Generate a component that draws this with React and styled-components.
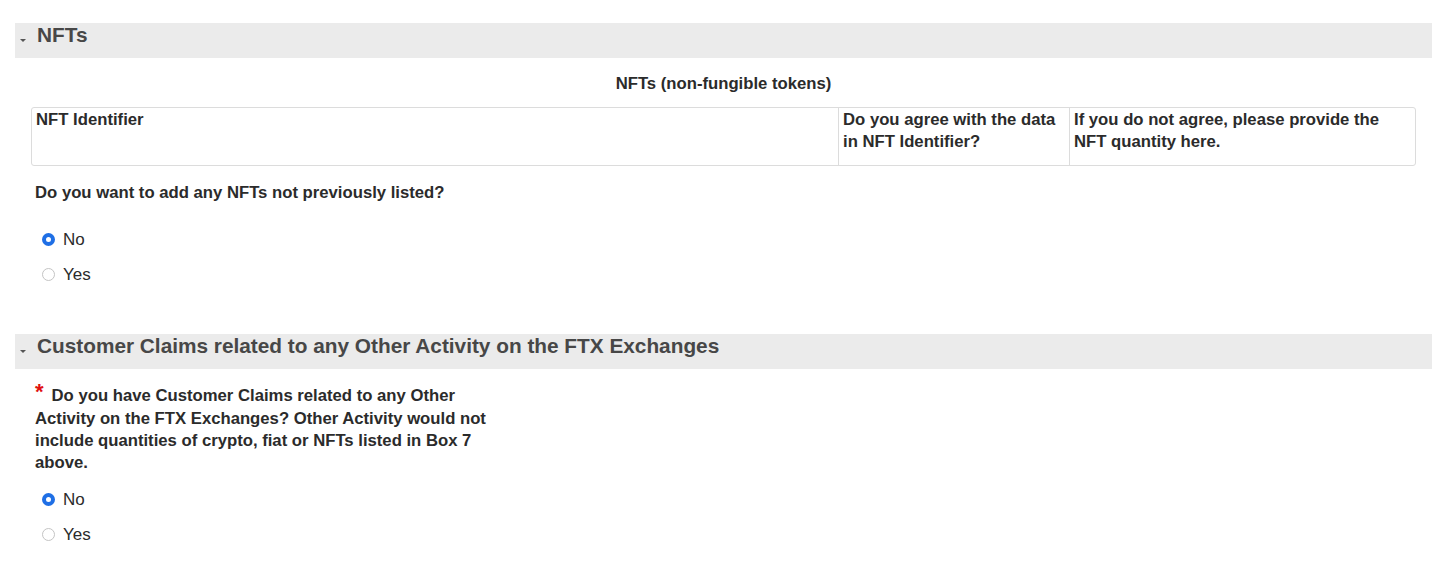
import React from 'react';
import styled, { createGlobalStyle } from 'styled-components';

const GlobalStyle = createGlobalStyle`
body {
  margin: 0;
  background: #fff;
  font-family: 'Liberation Sans', Arial, sans-serif;
  color: #2b2b2b;
}
`;

const Page = styled.div`
padding: 23px 15px 0 15px;
`;

const SectionBar = styled.div`
display: flex;
align-items: flex-start;
height: 35px;
background: #ebebeb;
padding-left: 5px;
`;

const Caret = styled.span`
width: 0;
height: 0;
border-left: 3px solid transparent;
border-right: 3px solid transparent;
border-top: 3px solid #555;
margin: 16px 11px 0 0;
`;

const SectionTitle = styled.h2`
margin: 0;
font-size: 20.8px;
line-height: 24px;
font-weight: 700;
color: #474747;
`;

const SectionBody = styled.div`
padding: ${(p) => p.top || 0}px 16px ${(p) => p.bottom || 0}px 16px;
`;

const TableCaption = styled.div`
text-align: center;
font-size: 16.7px;
font-weight: 700;
line-height: 20px;
margin-bottom: 13px;
`;

const Table = styled.div`
display: grid;
grid-template-columns: 806px 231px 1fr;
border: 1px solid #dcdcdc;
border-radius: 3px;
height: 59px;
box-sizing: border-box;
`;

const HeadCell = styled.div`
padding: 1px 5px 0 4px;
font-size: 16.7px;
font-weight: 700;
line-height: 22px;
border-left: ${(p) => (p.first ? 'none' : '1px solid #dcdcdc')};
`;

const Question = styled.div`
font-size: 16.7px;
font-weight: 700;
line-height: 22.3px;
padding-left: 4px;
max-width: ${(p) => p.max || 'none'};
margin-top: ${(p) => p.top || 0}px;
`;

const Star = styled.span`
color: #e01010;
font-size: 22px;
line-height: 0;
vertical-align: 2px;
margin-right: 8px;
`;

const RadioGroup = styled.div`
display: flex;
flex-direction: column;
margin-top: ${(p) => p.top || 0}px;
padding-left: 11px;
`;

const RadioRow = styled.label`
display: flex;
align-items: center;
height: 35px;
font-size: 17px;
color: #2b2b2b;
`;

const RadioDot = styled.span`
width: 13px;
height: 13px;
box-sizing: border-box;
border-radius: 50%;
border: ${(p) => (p.checked ? '4px solid #1f6fe5' : '1px solid #c4c4c4')};
background: #fff;
margin: 0 8px 0 0;
`;

const Radio = ({ checked, label }) => (
  <RadioRow>
    <RadioDot checked={checked} />
    {label}
  </RadioRow>
);

const App = () => (
  <Page>
    <GlobalStyle />
    <SectionBar>
      <Caret />
      <SectionTitle>NFTs</SectionTitle>
    </SectionBar>
    <SectionBody top={16} bottom={42}>
      <TableCaption>NFTs (non-fungible tokens)</TableCaption>
      <Table>
        <HeadCell first>NFT Identifier</HeadCell>
        <HeadCell>Do you agree with the data in NFT Identifier?</HeadCell>
        <HeadCell>If you do not agree, please provide the NFT quantity here.</HeadCell>
      </Table>
      <Question top={16}>Do you want to add any NFTs not previously listed?</Question>
      <RadioGroup top={18}>
        <Radio checked label="No" />
        <Radio label="Yes" />
      </RadioGroup>
    </SectionBody>
    <SectionBar>
      <Caret />
      <SectionTitle>Customer Claims related to any Other Activity on the FTX Exchanges</SectionTitle>
    </SectionBar>
    <SectionBody top={16}>
      <Question max="468px">
        <Star>*</Star>Do you have Customer Claims related to any Other Activity on the FTX Exchanges? Other Activity would not include quantities of crypto, fiat or NFTs listed in Box 7 above.
      </Question>
      <RadioGroup top={8}>
        <Radio checked label="No" />
        <Radio label="Yes" />
      </RadioGroup>
    </SectionBody>
  </Page>
);

export default App;
